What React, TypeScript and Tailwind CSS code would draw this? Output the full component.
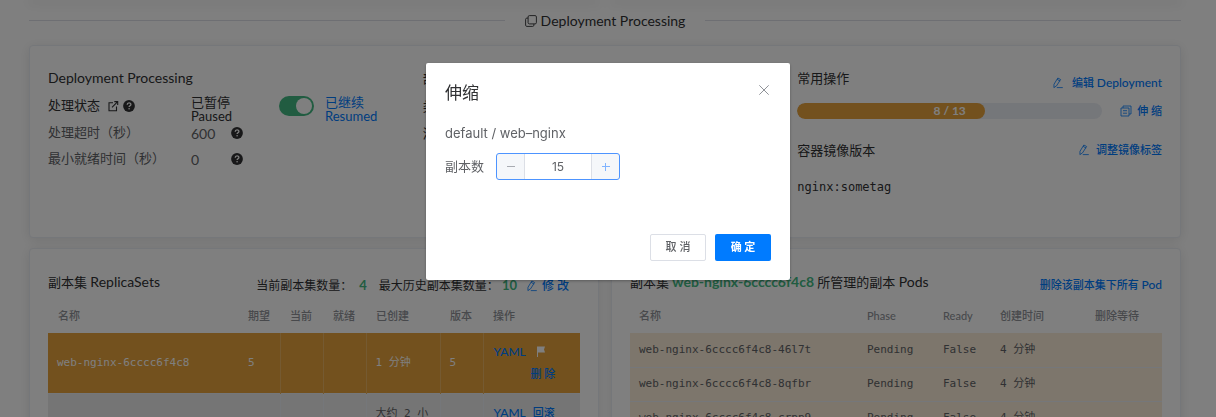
import React from "react";

const LINK = "text-[#007bff] font-medium";
const CJK = "font-['Lato','Noto_Sans_CJK_SC',sans-serif]";
const MONO = "font-['DejaVu_Sans_Mono','Noto_Sans_CJK_SC',monospace]";
const CARD = "rounded border border-[#ebeef5] bg-white px-[18px] pt-[21px] shadow-[0_2px_12px_0_rgba(0,0,0,0.1)]";

function EditIcon() {
  return (
    <svg viewBox="0 0 12 12" className="size-3 shrink-0" fill="none" stroke="currentColor" strokeWidth="0.8" strokeLinejoin="round" strokeLinecap="round" aria-hidden="true">
      <path d="M6.2 1.2 8.6 2.5 4.5 8.9 1.9 10.6 2 7.6ZM5.4 2.5 7.8 3.9M5.2 10.6h5.2" />
    </svg>
  );
}

function DocumentsIcon() {
  return (
    <svg viewBox="0 0 12 12" className="size-3 shrink-0" fill="none" stroke="currentColor" strokeWidth="0.8" aria-hidden="true">
      <path d="M1 3h8v8H1zM3 3V1h8v8H9M3 5.7h4M3 8.2h4" />
    </svg>
  );
}

function CopyIcon() {
  return (
    <svg viewBox="0 0 12 12" className="size-3 shrink-0" fill="none" stroke="currentColor" strokeWidth="0.9" strokeLinejoin="round" aria-hidden="true">
      <rect x="3.1" y="0.6" width="8.3" height="8.3" rx="1.3" />
      <path d="M3.1 3.1H1.8C1.1 3.1.6 3.6.6 4.3v5.9c0 .7.5 1.2 1.2 1.2h5.9c.7 0 1.2-.5 1.2-1.2V8.9" />
    </svg>
  );
}

function HelpIcon() {
  return (
    <svg viewBox="0 0 12 12" className="size-3 shrink-0" aria-hidden="true">
      <circle cx="6" cy="6" r="5.9" fill="#303133" />
      <path d="M4.2 4.7C4.2 2.3 7.9 2.4 7.9 4.5 7.9 5.8 6.1 5.7 6.1 7" fill="none" stroke="white" strokeWidth="1.3" />
      <circle cx="6.1" cy="8.8" r="0.8" fill="white" />
    </svg>
  );
}

function ExternalIcon() {
  return (
    <svg viewBox="0 0 12 12" className="size-3 shrink-0" fill="none" stroke="currentColor" strokeWidth="1.1" aria-hidden="true">
      <path d="M6 2.7H2v8h7.5V6.5M5 7.4 10.4 1.8M7.3 1.6h3.4V5" />
    </svg>
  );
}

function StatusCard() {
  return (
    <section className={`grid min-h-[193px] grid-cols-3 gap-[10px] ${CARD}`}>
      <div>
        <h2 className="text-[14px] leading-[22px]">Deployment Processing</h2>
        <div className="mt-px flex h-8 items-center text-[13px]">
          <div className="flex w-[143px] items-center gap-1">
            处理状态 <span className="ml-[3px]"><ExternalIcon /></span> <HelpIcon />
          </div>
          <div className="flex items-center gap-[15px]">
            <label htmlFor="resume" className="w-[73px] pt-[5px] leading-[14px]">已暂停<br />Paused</label>
            <button id="resume" role="switch" aria-checked="true" className="flex h-5 w-[35px] items-center justify-end rounded-full bg-[#42b983] p-[2px]">
              <span className="size-4 rounded-full bg-white" />
            </button>
            <label htmlFor="resume" className="-ml-1 pt-[5px] leading-[14px] text-[#007bff]">已继续<br />Resumed</label>
          </div>
        </div>
        <div className="flex h-[22px] items-center text-[13px] text-[#606266]">
          <span className="w-[143px]">处理超时（秒）</span>
          <span className="w-10 text-[14px]">600</span>
          <HelpIcon />
        </div>
        <div className="mt-1 flex h-[22px] items-center text-[13px] text-[#606266]">
          <span className="w-[143px]">最小就绪时间（秒）</span>
          <span className="w-10 text-[14px]">0</span>
          <HelpIcon />
        </div>
      </div>
      <div className="text-[13px]">
        <h2 className="leading-[22px]">部署策略</h2>
        <p className="mt-px h-8 leading-8">类型</p>
        <p className="leading-[22px]">滚动更新</p>
      </div>
      <div className="text-[13px]">
        <div className="flex justify-between">
          <h2 className="leading-[22px]">常用操作</h2>
          <button className={`flex items-center gap-2 pt-[8px] text-[11px] leading-4 ${LINK}`}><EditIcon /><span>编辑 <span className="text-[12px]">Deployment</span></span></button>
        </div>
        <div className="mt-3 flex items-center gap-[18px]">
          <div className="flex h-4 flex-1 overflow-hidden rounded-full bg-[#ebeef5]">
            <div className="flex w-[61.5%] items-center justify-end rounded-full bg-[#e6a23c] pr-[19px] text-[12px] font-bold text-white">8 / 13</div>
          </div>
          <button className={`flex items-center gap-[5px] text-[11px] leading-4 ${LINK}`}><DocumentsIcon />伸 缩</button>
        </div>
        <div className="mt-5 flex items-center justify-between">
          <h2 className="leading-[22px]">容器镜像版本</h2>
          <button className={`flex items-center gap-[6px] text-[11px] leading-4 ${LINK}`}><EditIcon />调整镜像标签</button>
        </div>
        <p className={`mt-4 text-[12px] leading-5 ${MONO}`}>nginx:sometag</p>
      </div>
    </section>
  );
}

function ReplicaSets() {
  return (
    <section className={CARD}>
      <div className="flex h-[29px] items-start justify-between pr-[11px]">
        <h2 className="text-[13px] leading-6">副本集 <span className="text-[14px]">ReplicaSets</span></h2>
        <div className="flex items-center gap-3 text-[12px] leading-[30px]">
          <span>当前副本集数量： <b className="ml-1 text-[13px] text-[#42b983]">4</b></span>
          <span>最大历史副本集数量： <b className="text-[13px] text-[#42b983]">10</b></span>
          <button className={`-ml-[3px] flex items-center gap-1 text-[12px] ${LINK}`}><EditIcon />修 改</button>
        </div>
      </div>
      <table className="w-full table-fixed text-left text-[11px]">
        <colgroup>
          <col /><col className="w-[42px]" /><col className="w-[43px]" /><col className="w-[43px]" /><col className="w-[74px]" /><col className="w-[43px]" /><col className="w-[97px]" />
        </colgroup>
        <thead className="h-[34px] text-[#909399]">
          <tr>{["名称", "期望", "当前", "就绪", "已创建", "版本", "操作"].map((h) => <th key={h} className="pl-[10px] font-medium">{h}</th>)}</tr>
        </thead>
        <tbody className={MONO}>
          <tr className="h-[60px] border-b border-[#ebeef5] bg-[#e6a23c] text-white">
            <td className="pl-[9px]">web-nginx-6cccc6f4c8</td>
            <td className="border-r border-[#ebb563] pl-[10px]">5</td>
            <td className="border-r border-[#ebb563]" />
            <td className="border-r border-[#ebb563]" />
            <td className="border-r border-[#ebb563] pl-[9px]">1 分钟</td>
            <td className="border-r border-[#ebb563] pl-[9px]">5</td>
            <td className={`pl-[10px] ${CJK}`}>
              <div className="flex h-[22px] items-center gap-[10px]">
                <button className={`text-[12px] ${LINK}`}>YAML</button>
                <svg viewBox="0 0 10 12" className="h-3 w-[10px]" fill="white" aria-hidden="true"><path d="M1 .5h8L8 3.5l1 3H2V11H1z" /></svg>
              </div>
              <button className={`ml-[37px] h-[22px] ${LINK}`}>删 除</button>
            </td>
          </tr>
          <tr className="h-[60px] bg-[#ebebeb] align-top text-[#606266]">
            <td className="pl-[9px]" />
            <td className="border-r border-[#ebeef5]" />
            <td className="border-r border-[#ebeef5]" />
            <td className="border-r border-[#ebeef5]" />
            <td className="border-r border-[#ebeef5] px-[9px] pt-3">大约 2 小时</td>
            <td className="border-r border-[#ebeef5]" />
            <td className={`pt-[10px] pl-[10px] ${CJK}`}>
              <button className={`mr-[7px] text-[12px] ${LINK}`}>YAML</button><button className={LINK}>回滚</button>
            </td>
          </tr>
        </tbody>
      </table>
    </section>
  );
}

function Pods() {
  return (
    <section className={CARD}>
      <div className="flex h-[29px] items-start justify-between">
        <h2 className="text-[13px] leading-6">副本集 <b className="text-[14px] text-[#42b983]">web-nginx-6cccc6f4c8</b> 所管理的副本 <span className="text-[14px]">Pods</span></h2>
        <button className={`text-[11px] leading-[30px] ${LINK}`}>删除该副本集下所有 <span className="text-[12px]">Pod</span></button>
      </div>
      <table className="w-full table-fixed text-left text-[11px]">
        <colgroup>
          <col /><col className="w-[76px]" /><col className="w-[57px]" /><col className="w-[95px]" /><col className="w-[76px]" />
        </colgroup>
        <thead className="h-[34px] text-[#909399]">
          <tr>{["名称", "Phase", "Ready", "创建时间", "删除等待"].map((h) => <th key={h} className="pl-[9px] font-medium">{h}</th>)}</tr>
        </thead>
        <tbody className={MONO}>
          {["46l7t", "8qfbr", "crpp9"].map((id) => (
            <tr key={id} className="h-[34px] border-b border-[#ebeef5] bg-[#faecd8] text-[#606266]">
              <td className="pl-[9px]">web-nginx-6cccc6f4c8-{id}</td>
              <td className="pl-[9px]">Pending</td>
              <td className="pl-[9px]">False</td>
              <td className="pl-[9px]">4 分钟</td>
              <td />
            </tr>
          ))}
        </tbody>
      </table>
    </section>
  );
}

function ScaleDialog() {
  return (
    <div className="fixed inset-0 flex items-start justify-center bg-black/50 px-4 pt-[63px]">
      <div role="dialog" aria-modal="true" aria-labelledby="scale-title" className="w-full max-w-[364px] rounded-[2px] bg-white px-[19px] pt-[18px] pb-[19px] text-[#606266] shadow-[0_1px_3px_rgba(0,0,0,0.3)]">
        <div className="flex items-start justify-between">
          <h1 id="scale-title" className="text-[17px] leading-6 text-[#303133]">伸缩</h1>
          <button aria-label="关闭" className="mt-[3px] mr-px text-[#909399]">
            <svg viewBox="0 0 12 12" className="size-3" stroke="currentColor" strokeWidth="1"><path d="M1.3 1.3l9.4 9.4M10.7 1.3l-9.4 9.4" /></svg>
          </button>
        </div>
        <p className="mt-[18px] font-['Inter','Noto_Sans_CJK_SC',sans-serif] text-[13px] leading-5">default / web–nginx</p>
        <div className="mt-[10px] flex items-center gap-3 text-[13px]">
          <label htmlFor="replicas">副本数</label>
          <div className="flex h-[27px] w-[124px] overflow-hidden rounded-[3px] border border-[#4d94ff] bg-[#f5f7fa]">
            <button aria-label="减少" className="w-7 shrink-0 border-r border-[#dcdfe6]">
              <svg viewBox="0 0 10 10" className="mx-auto size-[10px]" stroke="#a8abb2"><path d="M1 4.5h8" /></svg>
            </button>
            <input id="replicas" defaultValue="15" className="w-0 min-w-0 flex-1 bg-white text-center font-['Inter',sans-serif] text-[12px] outline-none" />
            <button aria-label="增加" className="w-7 shrink-0 border-l border-[#dcdfe6]">
              <svg viewBox="0 0 10 10" className="mx-auto size-[10px]" stroke="#80b3ff"><path d="M1 4.5h8M4.5 1v8" /></svg>
            </button>
          </div>
        </div>
        <div className="mt-[54px] flex justify-end gap-[9px] text-[11px]">
          <button className="h-[27px] w-14 rounded-[2px] border border-[#dcdfe6] font-medium">取 消</button>
          <button className="h-[27px] w-14 rounded-[2px] bg-[#007bff] font-bold text-white">确 定</button>
        </div>
      </div>
    </div>
  );
}

export default function App() {
  return (
    <div className={`h-screen overflow-hidden bg-white pr-[35px] pl-[29px] text-[#303133] ${CJK}`}>
      <div className="grid h-0 grid-cols-2 gap-3">
        <div className="shadow-[0_2px_12px_2px_rgba(0,0,0,0.1)]" /><div className="shadow-[0_2px_12px_2px_rgba(0,0,0,0.1)]" />
      </div>
      <div className="flex h-[45px] items-center gap-5 pb-1 text-[14px] leading-5">
        <div className="h-px flex-1 bg-[#dcdfe6]" />
        <div className="flex items-center gap-1"><CopyIcon />Deployment Processing</div>
        <div className="h-px flex-1 bg-[#dcdfe6]" />
      </div>
      <StatusCard />
      <div className="mt-[10px] grid grid-cols-2 gap-3">
        <ReplicaSets />
        <Pods />
      </div>
      <ScaleDialog />
    </div>
  );
}
